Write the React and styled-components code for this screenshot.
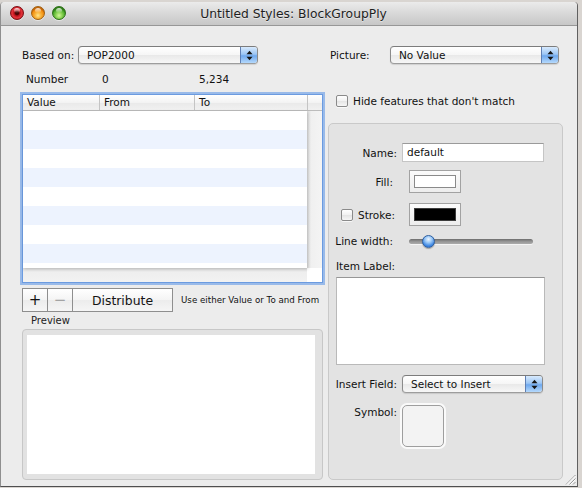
import React from "react";
import styled, { createGlobalStyle } from "styled-components";

const GlobalStyle = createGlobalStyle`
  * {
    box-sizing: border-box;
  }
  html,
  body {
    margin: 0;
    padding: 0;
  }
  body {
    background: #d9d5d1;
    font-family: "DejaVu Sans", sans-serif;
    font-size: 10.5px;
    color: #111;
    overflow: hidden;
  }
`;

const lights = [
  {
    bg: "radial-gradient(circle at 50% 50%, #4e0606 0 1.8px, #b8121a 2.8px, #e6343c 5px, #b1161d 7px)",
    rim: "#7c0d12",
  },
  {
    bg: "radial-gradient(circle at 50% 70%, #ffe58a 0, #f9b43b 3px, #f08a0c 6px, #c4650a 7px)",
    rim: "#a0600e",
  },
  {
    bg: "radial-gradient(circle at 50% 70%, #d2f59a 0, #8fd657 3px, #4aa828 6px, #2f7d17 7px)",
    rim: "#2c6f16",
  },
];

const rows = Array.from({ length: 9 }, (_, i) => i);

const Arrows = () => (
  <svg width="7" height="11" viewBox="0 0 7 11">
    <polygon points="0.5,4.3 3.5,0.8 6.5,4.3" fill="#151515" />
    <polygon points="0.5,6.7 3.5,10.2 6.5,6.7" fill="#151515" />
  </svg>
);

const PopupButton = ({ w, children }) => (
  <Popup $w={w}>
    <PopupText>{children}</PopupText>
    <PopupArrow>
      <Arrows />
    </PopupArrow>
  </Popup>
);

const App = () => {
  return (
    <>
      <GlobalStyle />
      <Window>
        <TitleBar>
          <Lights>
            {lights.map((l, i) => (
              <Light key={i} $bg={l.bg} $rim={l.rim} />
            ))}
          </Lights>
          <Title>Untitled Styles: BlockGroupPly</Title>
          <span />
        </TitleBar>

        <Body>
          <Column>
            <FieldRow>
              <FieldLabel $w={56}>Based on:</FieldLabel>
              <PopupButton w={180}>POP2000</PopupButton>
            </FieldRow>

            <NumberRow>
              <span>Number</span>
              <span>0</span>
              <span>5,234</span>
            </NumberRow>

            <Table>
              <TableHead>
                <HeadCell>Value</HeadCell>
                <HeadCell $line>From</HeadCell>
                <HeadCell $line>To</HeadCell>
                <HeadCell $line />
              </TableHead>
              <TableBody>
                <RowArea>
                  {rows.map((r) => (
                    <TableRow key={r} $alt={r % 2 === 1} />
                  ))}
                </RowArea>
                <SideStrip />
                <BottomStrip />
                <Corner />
              </TableBody>
            </Table>

            <ButtonBar>
              <SegButton $w={26} $size={15}>+</SegButton>
              <SegButton $w={26} $size={15} $dim>
                −
              </SegButton>
              <SegButton $w={101} $size={12.4}>
                Distribute
              </SegButton>
              <Hint>Use either Value or To and From</Hint>
            </ButtonBar>

            <PreviewLabel>Preview</PreviewLabel>
            <PreviewBox>
              <PreviewCanvas />
            </PreviewBox>
          </Column>

          <Column>
            <FieldRow $pl={2}>
              <FieldLabel $w={60}>Picture:</FieldLabel>
              <PopupButton w={169}>No Value</PopupButton>
            </FieldRow>

            <CheckRow>
              <Checkbox />
              <span>Hide features that don't match</span>
            </CheckRow>

            <Group>
              <FormRow>
                <Label>Name:</Label>
                <TextField>default</TextField>
              </FormRow>

              <FormRow $gap={8}>
                <Label $pr={4}>Fill:</Label>
                <ColorWell>
                  <Swatch $color="#fff" $rim="#8a8a8a" />
                </ColorWell>
              </FormRow>

              <FormRow $gap={10}>
                <Label $pr={2}>
                  <StrokeLabel>
                    <Checkbox />
                    <span>Stroke:</span>
                  </StrokeLabel>
                </Label>
                <ColorWell>
                  <Swatch $color="#000" $rim="#3c3c3c" />
                </ColorWell>
              </FormRow>

              <FormRow $gap={9}>
                <Label $pr={4}>Line width:</Label>
                <Track>
                  <Knob />
                </Track>
              </FormRow>

              <ItemLabel>Item Label:</ItemLabel>
              <TextArea />

              <FormRow $gap={10}>
                <Label>Insert Field:</Label>
                <PopupButton w={141}>Select to Insert</PopupButton>
              </FormRow>

              <FormRow $gap={12} $top>
                <Label $mt={1}>Symbol:</Label>
                <SymbolWell />
              </FormRow>
            </Group>
          </Column>
        </Body>

        <Grip width="11" height="11" viewBox="0 0 11 11">
          <line x1="10.5" y1="1" x2="1" y2="10.5" stroke="#9a9a9a" />
          <line x1="10.5" y1="4.5" x2="4.5" y2="10.5" stroke="#9a9a9a" />
          <line x1="10.5" y1="8" x2="8" y2="10.5" stroke="#9a9a9a" />
          <line x1="10.5" y1="2" x2="2" y2="10.5" stroke="#fff" />
          <line x1="10.5" y1="5.5" x2="5.5" y2="10.5" stroke="#fff" />
        </Grip>
      </Window>
    </>
  );
};

const Window = styled.div`
  position: relative;
  margin-top: 2px;
  width: 578px;
  height: 485px;
  display: flex;
  flex-direction: column;
  background: #ececec;
  border: 1px solid #8f8f8f;
  border-top: 0;
  border-right-color: #606060;
  border-bottom-color: #4f4f4f;
  border-radius: 4px 4px 0 0;
`;

const TitleBar = styled.div`
  flex: none;
  height: 24px;
  display: grid;
  grid-template-columns: 1fr auto 1fr;
  align-items: center;
  padding-left: 9px;
  background: linear-gradient(#ebebeb, #d6d6d6 55%, #c7c7c7);
  border-bottom: 1px solid #979797;
  border-radius: 4px 4px 0 0;
`;

const Lights = styled.div`
  display: flex;
  gap: 7px;
  margin-top: -1px;
`;

const Light = styled.span`
  position: relative;
  width: 14px;
  height: 14px;
  border-radius: 50%;
  background: ${(p) => p.$bg};
  border: 1px solid ${(p) => p.$rim};
  box-shadow: 0 1px 0 rgba(255, 255, 255, 0.5);
  &::after {
    content: "";
    position: absolute;
    left: 3px;
    right: 3px;
    top: 1px;
    height: 5px;
    border-radius: 50%;
    background: linear-gradient(rgba(255, 255, 255, 0.85), rgba(255, 255, 255, 0));
  }
`;

const Title = styled.div`
  font-size: 12.3px;
  color: #1f1f1f;
  text-shadow: 0 1px 0 rgba(255, 255, 255, 0.5);
  white-space: nowrap;
`;

const Body = styled.div`
  flex: 1;
  display: grid;
  grid-template-columns: 301px 235px;
  column-gap: 5px;
  align-items: start;
  padding: 20px 0 0 21px;
`;

const Column = styled.div`
  display: flex;
  flex-direction: column;
`;

const FieldRow = styled.div`
  display: flex;
  align-items: center;
  height: 18px;
  padding-left: ${(p) => p.$pl || 0}px;
`;

const FieldLabel = styled.span`
  width: ${(p) => p.$w}px;
  white-space: nowrap;
`;

const Popup = styled.div`
  width: ${(p) => p.$w}px;
  height: 18px;
  display: flex;
  border: 1px solid #8b8b8b;
  border-top-color: #7c7c7c;
  border-bottom-color: #9d9d9d;
  border-radius: 4px;
  background: linear-gradient(#ffffff, #f6f6f6 48%, #e9e9e9 52%, #f7f7f7);
  box-shadow: 0 1px 1px rgba(0, 0, 0, 0.12);
  overflow: hidden;
`;

const PopupText = styled.span`
  flex: 1;
  padding-left: 8px;
  line-height: 16px;
  white-space: nowrap;
`;

const PopupArrow = styled.span`
  width: 17px;
  display: flex;
  align-items: center;
  justify-content: center;
  border-left: 1px solid #5f7fb3;
  background: linear-gradient(#d8eafd, #9cc6f5 45%, #6ea8ee 55%, #b5d9fc);
`;

const NumberRow = styled.div`
  margin-top: 8px;
  height: 13px;
  display: grid;
  grid-template-columns: 76px 97px auto;
  align-items: center;
  padding-left: 4px;
`;

const Table = styled.div`
  margin-top: 9px;
  width: 301px;
  border: 1px solid #6b9be0;
  box-shadow: 0 0 0 2px rgba(125, 170, 232, 0.75);
  background: #fff;
`;

const TableHead = styled.div`
  display: grid;
  grid-template-columns: 76px 95px 113px 15px;
  height: 16px;
  background: linear-gradient(#ffffff, #f3f3f3 50%, #e9e9e9 51%, #f1f1f1);
  border-bottom: 1px solid #bcbcbc;
`;

const HeadCell = styled.div`
  padding-left: 4px;
  line-height: 15px;
  border-left: ${(p) => (p.$line ? "1px solid #c4c4c4" : "0")};
`;

const TableBody = styled.div`
  display: grid;
  grid-template-columns: 284px 15px;
  grid-template-rows: 157px 14px;
`;

const RowArea = styled.div`
  overflow: hidden;
  box-shadow: 1px 1px 3px rgba(0, 0, 0, 0.18);
  position: relative;
`;

const TableRow = styled.div`
  height: 19px;
  background: ${(p) => (p.$alt ? "#edf3fe" : "#fff")};
`;

const SideStrip = styled.div`
  background: linear-gradient(90deg, #dedede, #f0f0f0 4px, #f4f4f4);
`;

const BottomStrip = styled.div`
  background: linear-gradient(#dedede, #eeeeee 4px, #f2f2f2);
`;

const Corner = styled.div`
  background: #fff;
`;

const ButtonBar = styled.div`
  margin-top: 5px;
  height: 24px;
  display: flex;
  align-items: center;
`;

const SegButton = styled.div`
  width: ${(p) => p.$w}px;
  height: 24px;
  margin-right: -1px;
  display: flex;
  align-items: center;
  justify-content: center;
  border: 1px solid #8e8e8e;
  background: linear-gradient(#ffffff, #f4f4f4 50%, #ececec 51%, #f5f5f5);
  font-size: ${(p) => p.$size}px;
  color: ${(p) => (p.$dim ? "#a3a3a3" : "#141414")};
`;

const Hint = styled.span`
  margin-left: 9px;
  font-size: 8.7px;
  white-space: nowrap;
`;

const PreviewLabel = styled.div`
  margin-top: 3px;
  padding-left: 9px;
  height: 12px;
  line-height: 12px;
  font-size: 10px;
  color: #222;
`;

const PreviewBox = styled.div`
  margin-top: 2px;
  height: 151px;
  display: flex;
  padding: 5px 7px 5px 4px;
  background: #e2e2e2;
  border: 1px solid #c7c7c7;
  border-radius: 4px;
`;

const PreviewCanvas = styled.div`
  flex: 1;
  background: #fff;
`;

const CheckRow = styled.div`
  margin-top: 30px;
  height: 13px;
  display: flex;
  align-items: center;
  gap: 5px;
  padding-left: 8px;
  white-space: nowrap;
`;

const Checkbox = styled.span`
  flex: none;
  width: 12px;
  height: 12px;
  border: 1px solid #8a8a8a;
  border-radius: 2px;
  background: linear-gradient(#ffffff, #f1f1f1 50%, #e4e4e4 51%, #f6f6f6);
  box-shadow: 0 1px 0 rgba(255, 255, 255, 0.7);
`;

const Group = styled.div`
  margin-top: 16px;
  height: 357px;
  padding: 19px 0 0 7px;
  background: #e3e3e3;
  border: 1px solid #c9c9c9;
  border-radius: 5px;
`;

const FormRow = styled.div`
  display: grid;
  grid-template-columns: 61px 143px;
  column-gap: 5px;
  align-items: ${(p) => (p.$top ? "start" : "center")};
  margin-top: ${(p) => p.$gap || 0}px;
`;

const Label = styled.div`
  text-align: right;
  white-space: nowrap;
  line-height: 12px;
  padding-right: ${(p) => p.$pr || 0}px;
  margin-top: ${(p) => p.$mt || 0}px;
  display: flex;
  justify-content: flex-end;
`;

const StrokeLabel = styled.span`
  display: flex;
  align-items: center;
  gap: 5px;
`;

const TextField = styled.div`
  width: 142px;
  height: 19px;
  padding-left: 4px;
  line-height: 17px;
  background: #fff;
  border: 1px solid #c5c5c5;
  border-top-color: #9a9a9a;
`;

const ColorWell = styled.div`
  margin-left: 7px;
  width: 52px;
  height: 23px;
  display: flex;
  align-items: center;
  justify-content: center;
  border: 1px solid #a2a2a2;
  background: linear-gradient(#fbfbfb, #ededed);
`;

const Swatch = styled.span`
  width: 42px;
  height: 13px;
  background: ${(p) => p.$color};
  border: 1px solid ${(p) => p.$rim};
`;

const Track = styled.div`
  position: relative;
  margin-left: 7px;
  width: 124px;
  height: 5px;
  border-radius: 3px;
  background: linear-gradient(#6d6d6d, #959595 50%, #acacac);
  box-shadow: 0 1px 0 rgba(255, 255, 255, 0.6);
`;

const Knob = styled.span`
  position: absolute;
  left: 13px;
  top: -4px;
  width: 13px;
  height: 13px;
  border-radius: 50%;
  border: 1px solid #2f5f9f;
  background: radial-gradient(circle at 50% 30%, #eef6ff 0, #9cc9f7 35%, #3d86e2 70%, #2a66c4);
  box-shadow: 0 1px 1px rgba(0, 0, 0, 0.3);
`;

const ItemLabel = styled.div`
  margin-top: 13px;
  height: 12px;
  line-height: 12px;
`;

const TextArea = styled.div`
  margin-top: 5px;
  width: 209px;
  height: 88px;
  background: #fff;
  border: 1px solid #b9b9b9;
  border-top-color: #969696;
`;

const SymbolWell = styled.div`
  width: 42px;
  height: 42px;
  border: 1px solid #9e9e9e;
  border-radius: 5px;
  background: #f3f3f3;
  box-shadow: 0 0 0 2px #fafafa;
`;

const Grip = styled.svg`
  position: absolute;
  right: 1px;
  bottom: 1px;
`;

export default App;
